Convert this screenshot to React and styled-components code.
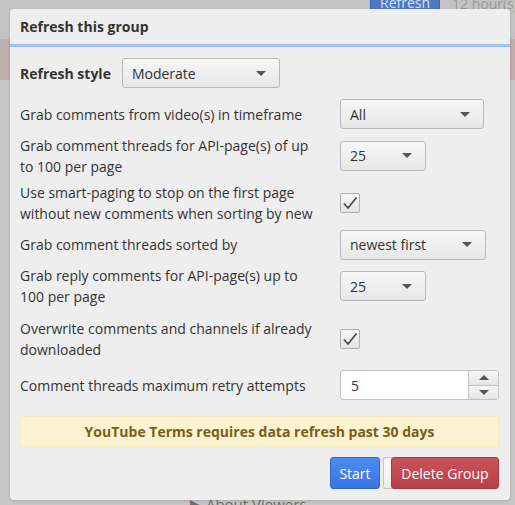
import React from "react";
import styled, { createGlobalStyle } from "styled-components";

const Global = createGlobalStyle`
  html, body { margin: 0; padding: 0; }
  body {
    width: 515px;
    height: 505px;
    overflow: hidden;
    background: #c2c2c2;
    font-family: "Open Sans", "Noto Sans", sans-serif;
  }
`;

const Page = styled.div`
  position: relative;
  width: 515px;
  height: 505px;
  overflow: hidden;
  background: #c4c4c4;
`;

// what shows behind the dimmed overlay
const BackBand = styled.div`
  height: ${p => p.h}px;
  background: ${p => p.bg};
  border-bottom: 1px solid ${p => p.line || "transparent"};
`;

const TopTools = styled.div`
  position: absolute;
  top: -10px;
  left: 370px;
  display: flex;
  gap: 12px;
  align-items: center;
  font-size: 14px;
  white-space: nowrap;
`;

const BackBlue = styled.div`
  background: #4f78c4;
  color: #d7e0f0;
  padding: 2px 9px 3px;
  border: 1px solid #3e64ad;
`;

const BackText = styled.div`
  color: #9a9a9a;
`;

const BackFooter = styled.div`
  position: absolute;
  left: 190px;
  top: 494px;
  color: #6d6d6d;
  font-size: 15px;
  white-space: nowrap;
`;

const Modal = styled.div`
  position: absolute;
  left: 10px;
  top: 9px;
  width: 500px;
  background: #eeeeee;
  border-radius: 4px;
  box-shadow: 0 1px 3px rgba(0,0,0,0.15);
  color: #333;
`;

const Header = styled.div`
  height: 38px;
  box-sizing: border-box;
  padding: 8px 10px 0;
  border-bottom: 3px solid #9fc5f8;
  font-weight: 700;
  font-size: 14px;
`;

const Body = styled.div`
  padding: 11px 11px 0 10px;
`;

const StyleRow = styled.div`
  display: flex;
  align-items: center;
  gap: 11px;
  font-weight: 700;
  font-size: 14px;
  margin-bottom: 11px;
`;

const Grid = styled.div`
  display: grid;
  grid-template-columns: 320px 1fr;
  row-gap: 5.5px;
  align-items: center;
`;

const Label = styled.div`
  font-size: 14px;
  line-height: 21px;
  padding-right: 22px;
  margin-top: ${p => (p.spaced ? "5px" : "0")};
`;

const Cell = styled.div`
  display: flex;
  align-items: center;
  margin-top: ${p => (p.spaced ? "5px" : "0")};
`;

const SelectBox = styled.div`
  width: ${p => p.w}px;
  height: 30px;
  box-sizing: border-box;
  border: 1px solid #b9b9b9;
  border-radius: 3px;
  background: linear-gradient(#f7f7f7, #e7e7e7);
  display: flex;
  align-items: center;
  justify-content: space-between;
  padding: 0 13px 0 9px;
  font-size: 14px;
  font-weight: 400;
  color: #333;
`;

const Caret = styled.span`
  width: 0;
  height: 0;
  border-left: 5px solid transparent;
  border-right: 5px solid transparent;
  border-top: 5px solid #555;
`;

const Check = styled.div`
  width: 20px;
  height: 20px;
  box-sizing: border-box;
  border: 1px solid #b0b0b0;
  border-radius: 2px;
  background: linear-gradient(#f6f6f6, #e4e4e4);
  display: flex;
  align-items: center;
  justify-content: center;
`;

const Spinner = styled.div`
  display: flex;
  width: 159px;
  height: 30px;
  box-sizing: border-box;
  border: 1px solid #c2c2c2;
  border-radius: 3px;
  background: #fff;
  overflow: hidden;
`;

const SpinValue = styled.div`
  flex: 1;
  padding-left: 10px;
  display: flex;
  align-items: center;
  font-size: 14px;
`;

const SpinButtons = styled.div`
  width: 29px;
  border-left: 1px solid #c2c2c2;
  display: flex;
  flex-direction: column;
`;

const SpinBtn = styled.div`
  flex: 1;
  display: flex;
  align-items: center;
  justify-content: center;
  background: linear-gradient(#f7f7f7, #e5e5e5);
  & + & { border-top: 1px solid #c2c2c2; }
`;

const Arrow = styled.span`
  width: 0;
  height: 0;
  border-left: 5px solid transparent;
  border-right: 5px solid transparent;
  ${p => (p.up ? "border-bottom: 5px solid #555;" : "border-top: 5px solid #555;")}
`;

const Notice = styled.div`
  margin: 16px 0 0 0;
  height: 31px;
  box-sizing: border-box;
  background: #fcf3d3;
  border: 1px solid #f7ebc0;
  border-radius: 3px;
  color: #7a5e17;
  font-weight: 700;
  font-size: 14px;
  display: flex;
  align-items: center;
  justify-content: center;
`;

const Footer = styled.div`
  display: flex;
  justify-content: flex-end;
  align-items: center;
  padding: 10px 0 11px;
`;

const Button = styled.div`
  width: ${p => p.w}px;
  height: 32px;
  box-sizing: border-box;
  display: flex;
  align-items: center;
  justify-content: center;
  color: #fff;
  font-size: 14px;
  border-radius: 3px;
  border: 1px solid ${p => p.border};
  background: ${p => p.bg};
  position: relative;
`;

const Ghost = styled.div`
  width: 10px;
  height: 32px;
  box-sizing: border-box;
  margin-left: 3px;
  margin-right: -2px;
  border: 1px solid #c6c6c6;
  border-right: none;
  border-radius: 3px 0 0 3px;
  background: linear-gradient(#fdfdfd, #ececec);
`;

const CheckMark = () => (
  <svg width="16" height="14" viewBox="0 0 16 14">
    <path d="M2 7.5 L6 12 L14.5 1.5" fill="none" stroke="#444" strokeWidth="1.6" />
  </svg>
);

const Select = ({ w, value }) => (
  <SelectBox w={w}>
    <span>{value}</span>
    <Caret />
  </SelectBox>
);

export default function App() {
  return (
    <>
      <Global />
      <Page>
        <BackBand h={38} bg="#c3c3c3" />
        <BackBand h={40} bg="#c0adad" line="#b3b3b3" />
        <BackBand h={427} bg="#c6c6c6" />
        <TopTools>
          <BackBlue>Refresh</BackBlue>
          <BackText>12 hour(s)</BackText>
        </TopTools>
        <BackFooter>▶ About Viewers</BackFooter>

        <Modal>
          <Header>Refresh this group</Header>
          <Body>
            <StyleRow>
              Refresh style
              <Select w={158} value="Moderate" />
            </StyleRow>

            <Grid>
              <Label>Grab comments from video(s) in timeframe</Label>
              <Cell><Select w={144} value="All" /></Cell>

              <Label>Grab comment threads for API-page(s) of up to 100 per page</Label>
              <Cell><Select w={86} value="25" /></Cell>

              <Label>Use smart-paging to stop on the first page without new comments when sorting by new</Label>
              <Cell><Check><CheckMark /></Check></Cell>

              <Label>Grab comment threads sorted by</Label>
              <Cell><Select w={146} value="newest first" /></Cell>

              <Label>Grab reply comments for API-page(s) up to 100 per page</Label>
              <Cell><Select w={86} value="25" /></Cell>

              <Label spaced>Overwrite comments and channels if already downloaded</Label>
              <Cell spaced><Check><CheckMark /></Check></Cell>

              <Label spaced>Comment threads maximum retry attempts</Label>
              <Cell spaced>
                <Spinner>
                  <SpinValue>5</SpinValue>
                  <SpinButtons>
                    <SpinBtn><Arrow up /></SpinBtn>
                    <SpinBtn><Arrow /></SpinBtn>
                  </SpinButtons>
                </Spinner>
              </Cell>
            </Grid>

            <Notice>YouTube Terms requires data refresh past 30 days</Notice>

            <Footer>
              <Button w={50} bg="linear-gradient(#4c8cf2, #3a75e4)" border="#2f67cf">Start</Button>
              <Ghost />
              <Button w={108} bg="linear-gradient(#c9525a, #b8404a)" border="#a8373f">Delete Group</Button>
            </Footer>
          </Body>
        </Modal>
      </Page>
    </>
  );
}
